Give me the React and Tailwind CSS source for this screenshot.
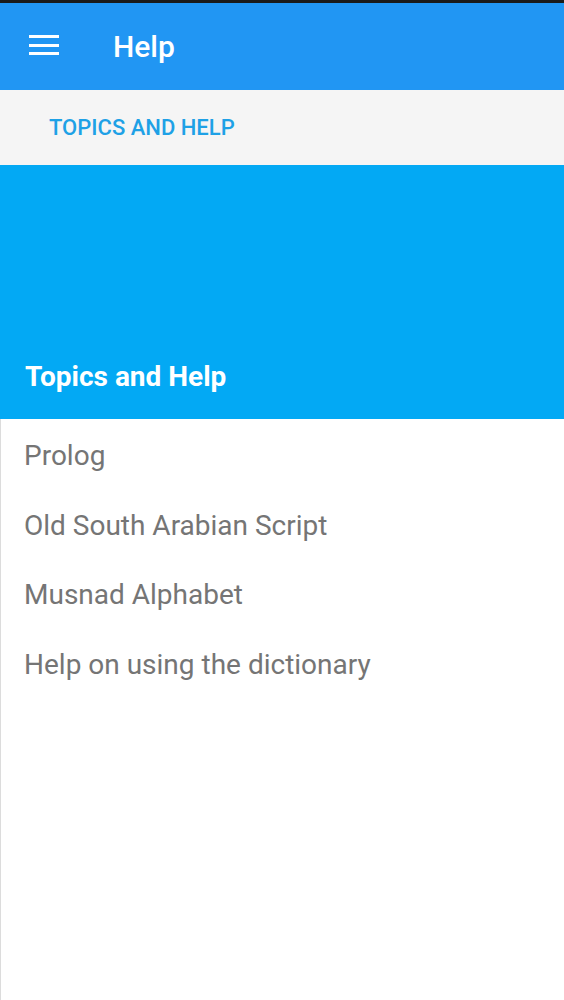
export default function App() {
  const topics = [
    "Prolog",
    "Old South Arabian Script",
    "Musnad Alphabet",
    "Help on using the dictionary",
  ];

  return (
    <div className="min-h-screen w-full bg-white font-['Roboto',sans-serif] flex flex-col">
      <div className="h-[3px] bg-[#1a1a1a]" />

      {/* app bar */}
      <header className="h-[87px] bg-[#2196f3] flex items-center">
        <button className="ml-[29px] mb-[3px] w-[30px] flex flex-col gap-[5.5px]">
          <span className="block h-[3px] bg-white" />
          <span className="block h-[3px] bg-white" />
          <span className="block h-[3px] bg-white" />
        </button>
        <h1 className="ml-[54px] text-[30px] font-medium text-white leading-none">
          Help
        </h1>
      </header>

      {/* tab bar */}
      <div className="h-[75px] bg-[#f5f5f5] flex items-center px-[49px]">
        <span className="text-[22px] font-medium text-[#1ea1e6] leading-none">
          TOPICS AND HELP
        </span>
      </div>

      {/* section banner */}
      <div className="h-[254px] bg-[#03a9f4] flex items-end px-[25px] pb-[28px]">
        <h2 className="text-[28px] font-bold text-white leading-none">
          Topics and Help
        </h2>
      </div>

      {/* list */}
      <div className="flex-1 border-l border-[#dcdcdc]">
        <ul className="pt-[18px]">
          {topics.map((t) => (
            <li
              key={t}
              className="h-[69.5px] flex items-start px-[23px] text-[28px] text-[#757575] leading-[38px]"
            >
              {t}
            </li>
          ))}
        </ul>
      </div>
    </div>
  );
}
